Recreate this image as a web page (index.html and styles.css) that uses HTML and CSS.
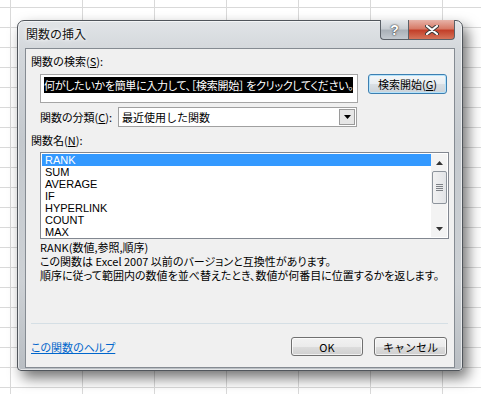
FILE: index.html
```html
<!DOCTYPE html>
<html lang="ja">
<head>
  <meta charset="UTF-8" />
  <title>関数の挿入</title>
  <link rel="stylesheet" href="styles.css">
</head>
<body>

  <div class="dialog">
    <div class="titlebar">
      <span class="title">関数の挿入</span>
      <div class="caption-btns">
        <span class="cap-help">?</span>
        <span class="cap-close">
          <svg width="14" height="10" viewBox="0 0 14 10">
            <path d="M2 1 L12 9 M12 1 L2 9" stroke="#3a3a3a" stroke-width="4" stroke-linecap="round"/>
            <path d="M2 1 L12 9 M12 1 L2 9" stroke="#fff" stroke-width="2.2" stroke-linecap="round"/>
          </svg>
        </span>
      </div>
    </div>

    <div class="client">
      <div class="label top">関数の検索(<u>S</u>):</div>

      <div class="search-row">
        <div class="search-box"><span class="sel">何がしたいかを簡単に入力して、［検索開始］ をクリックしてください。</span></div>
        <button class="btn btn-focus">検索開始(<u>G</u>)</button>
      </div>

      <div class="cat-row">
        <span class="cat-label">関数の分類(<u>C</u>):</span>
        <div class="combo">
          <span class="combo-text">最近使用した関数</span>
          <span class="combo-arrow"><svg width="7" height="4" viewBox="0 0 7 4"><path d="M0 0 H7 L3.5 4 Z" fill="#000"/></svg></span>
        </div>
      </div>

      <div class="label">関数名(<u>N</u>):</div>

      <div class="listbox">
        <ul class="items">
          <li class="selected">RANK</li>
          <li>SUM</li>
          <li>AVERAGE</li>
          <li>IF</li>
          <li>HYPERLINK</li>
          <li>COUNT</li>
          <li>MAX</li>
        </ul>
        <div class="scrollbar">
          <span class="sb-arrow"><svg width="7" height="4" viewBox="0 0 7 4"><path d="M0 4 H7 L3.5 0 Z" fill="#333"/></svg></span>
          <span class="sb-thumb"><i></i><i></i><i></i><i></i></span>
          <span class="sb-space"></span>
          <span class="sb-arrow"><svg width="7" height="4" viewBox="0 0 7 4"><path d="M0 0 H7 L3.5 4 Z" fill="#333"/></svg></span>
        </div>
      </div>

      <div class="desc">
        <p>RANK(数値,参照,順序)</p>
        <p>この関数は Excel 2007 以前のバージョンと互換性があります。</p>
        <p>順序に従って範囲内の数値を並べ替えたとき、数値が何番目に位置するかを返します。</p>
      </div>

      <div class="separator"></div>

      <div class="footer">
        <a href="#" class="help-link">この関数のヘルプ</a>
        <div class="footer-btns">
          <button class="btn btn-ok">OK</button>
          <button class="btn btn-cancel">キャンセル</button>
        </div>
      </div>
    </div>
  </div>

</body>
</html>
```

FILE: styles.css
```css
* {
  margin: 0;
  padding: 0;
  box-sizing: border-box;
}

body {
  width: 481px;
  height: 394px;
  overflow: hidden;
  padding: 20px 0 0 17px;
  font-family: "Noto Sans CJK JP", "Liberation Sans", sans-serif;
  font-size: 11px;
  color: #000;
  background-color: #fff;
  background-image:
    linear-gradient(to right, #d9d9d9 1px, transparent 1px),
    linear-gradient(to bottom, #d9d9d9 1px, transparent 1px);
  background-size: 72px 20px;
  background-position: 10px 7px;
}

u {
  text-decoration: underline;
  text-underline-offset: 1px;
}

/* window frame */
.dialog {
  width: 446px;
  height: 351px;
  display: flex;
  flex-direction: column;
  padding: 0 7px 2px 7px;
  border: 1px solid #50555b;
  border-radius: 7px 7px 4px 4px;
  background: linear-gradient(to bottom, #e1e4e7 0px, #d3d7db 30px, #c4c9ce 120px, #cdd1d5 260px, #b9bec3 100%);
  box-shadow: 5px 7px 14px rgba(0,0,0,0.55), inset 0 0 0 1px rgba(255,255,255,0.6);
}

.titlebar {
  height: 27px;
  display: flex;
  justify-content: space-between;
  align-items: flex-start;
}

.title {
  padding: 5px 0 0 1px;
  font-size: 12px;
  line-height: 16px;
  color: #111;
  text-shadow: 0 0 6px #fff, 0 0 3px #fff;
}

.caption-btns {
  display: flex;
  margin-top: -1px;
}

.cap-help,
.cap-close {
  height: 20px;
  display: flex;
  align-items: center;
  justify-content: center;
  border: 1px solid #5b6168;
  border-top: none;
}

.cap-help {
  width: 28px;
  border-radius: 0 0 0 4px;
  border-right: none;
  background: linear-gradient(to bottom, #e5e8eb 0%, #c9ced3 45%, #aab1b8 55%, #c3c9cf 100%);
  color: #fff;
  font-family: "Liberation Sans", sans-serif;
  font-weight: bold;
  font-size: 14px;
  text-shadow: 0 0 2px #333, 0 0 1px #333;
}

.cap-close {
  width: 47px;
  border-radius: 0 0 4px 0;
  background: linear-gradient(to bottom, #e7b3a8 0%, #d77b68 45%, #c3402a 55%, #d5745a 100%);
}

/* client area */
.client {
  flex: 1;
  display: flex;
  flex-direction: column;
  background: #f0f0f0;
  border: 1px solid #858b92;
}

.label {
  margin: 6px 0 0 5px;
  line-height: 14px;
}

.label.top {
  margin-top: 5px;
}

.search-row {
  display: flex;
  align-items: flex-start;
  margin: 6px 0 0 14px;
}

.search-box {
  width: 318px;
  height: 29px;
  padding: 2px 0 0 3px;
  background: #fff;
  border: 1px solid #a5a5a5;
  white-space: nowrap;
  overflow: hidden;
  font-feature-settings: "palt";
  letter-spacing: -0.3px;
}

.sel {
  display: inline-block;
  background: #000;
  color: #fff;
  line-height: 16px;
}

.btn {
  height: 20px;
  font-family: inherit;
  font-size: 11px;
  color: #000;
  border: 1px solid #707070;
  border-radius: 3px;
  background: linear-gradient(to bottom, #f2f2f2 0%, #ebebeb 50%, #dddddd 51%, #cfcfcf 100%);
  box-shadow: inset 0 0 0 1px rgba(255,255,255,0.7);
}

.btn-focus {
  width: 79px;
  margin-left: 10px;
  border-color: #3c7fb1;
  box-shadow: inset 0 0 0 1px #b5e3fb;
  background: linear-gradient(to bottom, #f4f7f9 0%, #e8edf1 50%, #d9dfe4 51%, #cbd2d8 100%);
}

.cat-row {
  display: flex;
  align-items: center;
  margin: 4px 0 0 14px;
}

.cat-label {
  width: 78px;
  white-space: nowrap;
  font-feature-settings: "palt";
}

.combo {
  width: 239px;
  height: 20px;
  display: flex;
  align-items: center;
  justify-content: space-between;
  background: #fff;
  border: 1px solid #a0a0a0;
  padding-left: 3px;
}

.combo-arrow {
  width: 16px;
  height: 16px;
  margin-right: 1px;
  display: flex;
  align-items: center;
  justify-content: center;
  background: #e6e6e6;
  border: 1px solid #9a9a9a;
}

/* list of functions */
.listbox {
  display: flex;
  width: 409px;
  height: 87px;
  margin: 5px 0 0 14px;
  background: #fff;
  border: 1px solid #828790;
  padding: 1px;
}

.items {
  flex: 1;
  list-style: none;
  font-family: "Liberation Sans", sans-serif;
  font-size: 11px;
}

.items li {
  height: 12px;
  line-height: 12px;
  padding-left: 3px;
}

.items li.selected {
  background: #3399ff;
  color: #fff;
}

.scrollbar {
  width: 16px;
  display: flex;
  flex-direction: column;
  align-items: center;
  background: #f3f3f3;
}

.sb-arrow {
  height: 17px;
  display: flex;
  align-items: center;
  justify-content: center;
}

.sb-thumb {
  width: 15px;
  height: 33px;
  display: flex;
  flex-direction: column;
  align-items: center;
  justify-content: center;
  gap: 1px;
  border: 1px solid #8d949c;
  border-radius: 2px;
  background: linear-gradient(to right, #f2f2f2, #e2e4e7);
}

.sb-thumb i {
  display: block;
  width: 7px;
  height: 1px;
  background: #7d8186;
}

.sb-space {
  flex: 1;
}

.desc {
  margin: 1px 0 0 14px;
  line-height: 14px;
}

.desc p {
  white-space: nowrap;
  font-feature-settings: "palt";
}

.separator {
  margin: auto 6px 0 5px;
  height: 1px;
  background: #d5dfe5;
}

.footer {
  display: flex;
  justify-content: space-between;
  align-items: center;
  margin-top: 13px;
  padding: 0 7px 11px 5px;
}

.help-link {
  color: #0066cc;
  text-decoration: underline;
  font-feature-settings: "palt";
}

.footer-btns {
  display: flex;
  gap: 11px;
}

.btn-ok {
  width: 72px;
  height: 19px;
}

.btn-cancel {
  width: 73px;
  height: 19px;
}
```
